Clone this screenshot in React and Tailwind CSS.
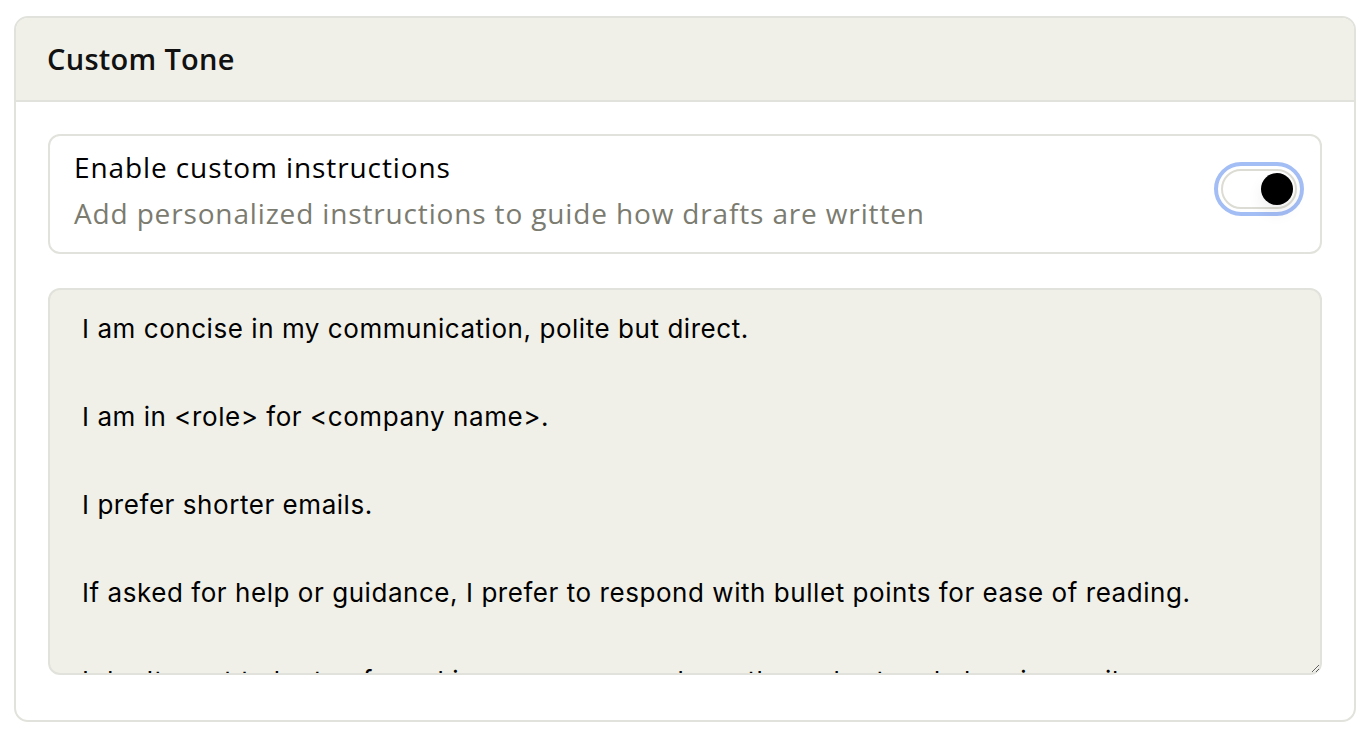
import React, { useState } from 'react';

const instructions = `I am concise in my communication, polite but direct.

I am in <role> for <company name>.

I prefer shorter emails.

If asked for help or guidance, I prefer to respond with bullet points for ease of reading.

I don't want to be too formal in my responses, keep them short and clear in emails.`;

export default function App() {
  const [enabled, setEnabled] = useState(true);
  const [text, setText] = useState(instructions);

  return (
    <div className="w-[1368px] h-[732px] bg-white pt-[16px] pl-[14px]" style={{ fontFamily: 'Inter, sans-serif' }}>
      <div className="w-[1342px] h-[706px] border-2 border-[#e2e2dc] rounded-[14px] overflow-hidden flex flex-col">
        <div className="h-[84px] bg-[#f0f0e8] border-b-2 border-[#e2e2dc] flex items-center px-[31px]">
          <h2 className="text-[29px] font-semibold text-[#111] tracking-[0.3px]" style={{ fontFamily: '"Open Sans", sans-serif' }}>Custom Tone</h2>
        </div>
        <div className="flex-1 px-[32px] pt-[32px] flex flex-col gap-[34px]">
          <div className="h-[120px] border-2 border-[#e2e2dc] rounded-[12px] flex items-center justify-between pl-[24px] pr-[16px]">
            <div className="flex flex-col gap-[6px] mb-[8px]" style={{ fontFamily: '"Open Sans", sans-serif' }}>
              <div className="text-[28px] leading-[40px] tracking-[0.9px] text-black">Enable custom instructions</div>
              <div className="text-[28px] leading-[40px] tracking-[0.85px] text-[#7b7b70]">Add personalized instructions to guide how drafts are written</div>
            </div>
            <button
              onClick={() => setEnabled(!enabled)}
              className="rounded-full p-[3px] border-[4px] border-[#a3bdf5] mb-[10px]"
            >
              <span className={`w-[76px] h-[40px] rounded-full border-2 border-[#dcdcd4] bg-white flex items-center px-[2px] ${enabled ? 'justify-end' : 'justify-start'}`}>
                <span className="w-[32px] h-[32px] rounded-full bg-black shadow-[0_8px_16px_rgba(0,0,0,0.07)]" />
              </span>
            </button>
          </div>
          <textarea
            value={text}
            onChange={e => setText(e.target.value)}
            className="h-[387px] w-full bg-[#f0f0e8] border-2 border-[#e2e2dc] rounded-[12px] pl-[32px] pr-[24px] pt-[17px] text-[26px] leading-[44px] tracking-[0.55px] text-black resize-y outline-none overflow-hidden"
            style={{ fontFamily: 'Inter, sans-serif' }}
          />
        </div>
      </div>
    </div>
  );
}
